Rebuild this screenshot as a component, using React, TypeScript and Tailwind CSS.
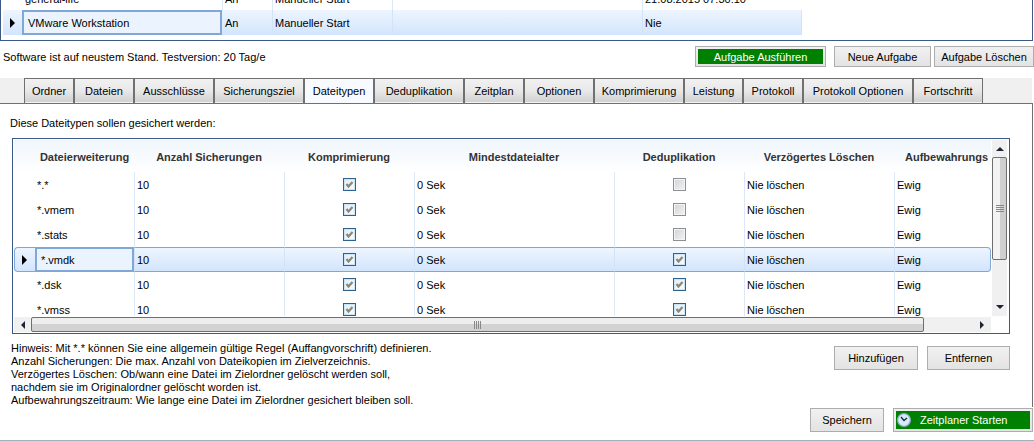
import type { ReactNode } from "react";

const tabs = [
  { name: "Ordner", width: "w-[50px]" },
  { name: "Dateien", width: "w-[60px]" },
  { name: "Ausschlüsse", width: "w-20" },
  { name: "Sicherungsziel", width: "w-[90px]" },
  { name: "Dateitypen", width: "w-[70px]" },
  { name: "Deduplikation", width: "w-[90px]" },
  { name: "Zeitplan", width: "w-[60px]" },
  { name: "Optionen", width: "w-[70px]" },
  { name: "Komprimierung", width: "w-[90px]" },
  { name: "Leistung", width: "w-[59px]" },
  { name: "Protokoll", width: "w-[60px]" },
  { name: "Protokoll Optionen", width: "w-[110px]" },
  { name: "Fortschritt", width: "w-[70px]" },
];

const fileTypes = [
  { ext: "*.*", dedup: false },
  { ext: "*.vmem", dedup: false },
  { ext: "*.stats", dedup: false },
  { ext: "*.vmdk", dedup: true, selected: true },
  { ext: "*.dsk", dedup: true },
  { ext: "*.vmss", dedup: true },
];

function Button({ className, children }: { className: string; children: ReactNode }) {
  return (
    <button type="button" className={`shrink-0 whitespace-nowrap border border-[#adadad] bg-linear-to-b from-[#f1f1f1] to-[#e3e3e3] ${className}`}>
      {children}
    </button>
  );
}

function Arrow({ points, className }: { points: string; className?: string }) {
  return (
    <svg viewBox="0 0 10 10" className={`size-2.5 shrink-0 ${className ?? "fill-[#1d2433]"}`} aria-hidden="true">
      <polygon points={points} />
    </svg>
  );
}

function Check({ label, checked }: { label: string; checked: boolean }) {
  return (
    <span className="relative mx-auto block size-[13px]">
      <input
        type="checkbox"
        aria-label={label}
        defaultChecked={checked}
        className="peer block size-[13px] appearance-none border border-[#8e8f8f] bg-linear-to-br from-[#d0d3d9] to-[#f3f3f3] shadow-[inset_0_0_0_1px_#f4f4f4] checked:border-[#2c628b] checked:from-[#e6ecf2] checked:to-[#fafafa] checked:shadow-[inset_0_0_0_1px_#c9e6f8]"
      />
      <svg viewBox="0 0 13 13" className="pointer-events-none absolute inset-0 hidden peer-checked:block" aria-hidden="true">
        <path d="M3.5 6 L5.5 8.5 L9.5 4" fill="none" stroke="#8a8878" strokeWidth="2.2" />
      </svg>
    </span>
  );
}

function TaskGrid() {
  return (
    <div className="mr-px flex h-[41px] flex-col justify-end overflow-hidden border-x border-b border-[#3b5a87] pb-[5px] pl-0.5">
      <table className="w-[799px] table-fixed border-separate border-spacing-0">
        <colgroup>
          <col className="w-[19px]" />
          <col className="w-[200px]" />
          <col className="w-[50px]" />
          <col className="w-[120px]" />
          <col className="w-[250px]" />
          <col />
        </colgroup>
        <tbody>
          <tr className="h-[25px]">
            <td></td>
            <td className="pl-[3px] pt-1">general-life</td>
            <td className="border-l border-[#dbe9f6] pl-0.5 pt-1">An</td>
            <td className="border-l border-[#dbe9f6] pl-0.5 pt-1">Manueller Start</td>
            <td className="border-l border-[#dbe9f6]"></td>
            <td className="border-l border-[#dbe9f6] pl-0.5 pt-1">21.08.2015 07:30:10</td>
          </tr>
          <tr className="h-[25px] bg-linear-to-b from-[#edf5ff] to-[#d3e5fc]">
            <td>
              <Arrow points="3,0 8,5 3,10" className="ml-1 fill-black" />
            </td>
            <td className="border-2 border-[#7fa8d9] bg-[#ebf4fe] pl-1 pt-0.5">VMware Workstation</td>
            <td className="pl-[3px] pt-0.5">An</td>
            <td className="border-l border-[#d3e3f5] pl-0.5 pt-0.5">Manueller Start</td>
            <td className="border-l border-[#d3e3f5]"></td>
            <td className="border-x border-[#d3e3f5] pl-0.5 pt-0.5">Nie</td>
          </tr>
        </tbody>
      </table>
    </div>
  );
}

function FileTypeGrid() {
  return (
    <div className="ml-3 mr-[22px] border border-[#3b5a87] py-px pl-px pr-0.5">
      <div className="flex h-44 gap-px">
        <div className="min-w-0 flex-1 overflow-hidden">
          <table className="w-full table-fixed border-separate border-spacing-0">
            <colgroup>
              <col className="w-[21px]" />
              <col className="w-[99px]" />
              <col className="w-[150px]" />
              <col className="w-[130px]" />
              <col className="w-[200px]" />
              <col className="w-[130px]" />
              <col className="w-[150px]" />
              <col />
            </colgroup>
            <thead>
              <tr className="h-8 whitespace-nowrap bg-linear-to-b from-[#eff6fc] to-white text-[#333]">
                <th></th>
                <th className="pt-0.5">Dateierweiterung</th>
                <th className="pt-0.5">Anzahl Sicherungen</th>
                <th className="pt-0.5">Komprimierung</th>
                <th className="pt-0.5">Mindestdateialter</th>
                <th className="pt-0.5">Deduplikation</th>
                <th className="pt-0.5">Verzögertes Löschen</th>
                <th className="overflow-hidden pl-[11px] pt-0.5 text-left">Aufbewahrungs</th>
              </tr>
            </thead>
            <tbody>
              {fileTypes.map(({ ext, dedup, selected }) => {
                const cell = selected
                  ? "border-y border-y-[#7fa8d9] border-l border-l-[#d3e3f5] bg-linear-to-b from-[#edf5ff] to-[#d3e5fc]"
                  : "border-l border-[#dbe9f6]";
                return (
                  <tr key={ext} className="h-[25px]">
                    <td className={selected ? "rounded-l border-y border-l border-[#7fa8d9] bg-linear-to-b from-[#edf5ff] to-[#d3e5fc]" : ""}>
                      {selected && <Arrow points="3,0 8,5 3,10" className="ml-1 fill-black" />}
                    </td>
                    <td className={selected ? "border-2 border-[#7fa8d9] bg-[#ebf4fe] pl-1 pt-0.5" : "pl-0.5 pt-0.5"}>{ext}</td>
                    <td className={`${cell} pl-0.5 pt-0.5`}>10</td>
                    <td className={cell}>
                      <Check label={`Komprimierung ${ext}`} checked />
                    </td>
                    <td className={`${cell} pl-0.5 pt-0.5`}>0 Sek</td>
                    <td className={cell}>
                      <Check label={`Deduplikation ${ext}`} checked={dedup} />
                    </td>
                    <td className={`${cell} pl-0.5 pt-0.5`}>Nie löschen</td>
                    <td className={`${cell} pl-0.5 pt-0.5 ${selected ? "rounded-r border-r border-r-[#7fa8d9]" : ""}`}>Ewig</td>
                  </tr>
                );
              })}
            </tbody>
          </table>
        </div>
        <div className="flex w-[15px] flex-col bg-[#f0f0f0]">
          <div className="flex h-[17px] items-center justify-center">
            <Arrow points="1,7 5,3 9,7" />
          </div>
          <div className="flex h-[103px] flex-col items-center justify-center gap-px rounded-xs border border-[#6f6f6f] bg-linear-to-r from-[#f3f3f3] from-50% to-[#cfcfcf] to-50%">
            <span className="h-px w-2 bg-[#888]"></span>
            <span className="h-px w-2 bg-[#888]"></span>
            <span className="h-px w-2 bg-[#888]"></span>
            <span className="h-px w-2 bg-[#888]"></span>
          </div>
          <div className="flex flex-1 items-end justify-center pb-1">
            <Arrow points="1,3 5,7 9,3" />
          </div>
        </div>
      </div>
      <div className="mr-4 mt-px flex h-[15px] bg-[#f0f0f0]">
        <div className="flex w-[17px] items-center justify-center">
          <Arrow points="7,1 3,5 7,9" />
        </div>
        <div className="flex flex-1 items-center justify-center gap-px rounded-xs border border-[#6f6f6f] bg-linear-to-b from-[#eeeeee] from-50% to-[#d2d2d2] to-50%">
          <span className="h-2 w-px bg-[#888]"></span>
          <span className="h-2 w-px bg-[#888]"></span>
          <span className="h-2 w-px bg-[#888]"></span>
          <span className="h-2 w-px bg-[#888]"></span>
        </div>
        <div className="flex w-[67px] items-center justify-end pr-1">
          <Arrow points="3,1 7,5 3,9" />
        </div>
      </div>
    </div>
  );
}

export default function App() {
  return (
    <div className="border-b border-[#a3afc0] bg-white pb-2 font-['Liberation_Sans',Arial,sans-serif] text-[11px] leading-[13px] text-black">
      <TaskGrid />

      <div className="flex items-center pb-[11px] pt-[5px]">
        <p className="flex-1 pl-[3px] pt-0.5">Software ist auf neustem Stand. Testversion: 20 Tag/e</p>
        <Button className="mr-2 h-[21px] w-[131px] p-0.5">
          <span className="flex h-full items-center justify-center bg-[#008000] pt-0.5 text-white">Aufgabe Ausführen</span>
        </Button>
        <Button className="mr-[3px] h-[21px] w-[97px] pt-0.5">Neue Aufgabe</Button>
        <Button className="h-[21px] w-[100px] pt-0.5">Aufgabe Löschen</Button>
      </div>

      <div role="tablist" className="mr-0.5 flex h-[25px] bg-[#f0f0f0] pl-6">
        {tabs.map(({ name, width }) => {
          const active = name === "Dateitypen";
          return (
            <button
              key={name}
              type="button"
              role="tab"
              aria-selected={active}
              className={`shrink-0 whitespace-nowrap border-x border-t border-[#707070] ${width} ${
                active ? "bg-[#f7fbff]" : "bg-linear-to-b from-[#f1f1f1] via-[#e8e8e8] via-50% to-[#cfcfcf] shadow-[inset_0_-1px_0_0_#f4f4f4]"
              }`}
            >
              {name}
            </button>
          );
        })}
      </div>

      <div role="tabpanel" className="mr-px border-r border-t border-[#707070] pt-[13px]">
        <p className="pb-2 pl-2.5">Diese Dateitypen sollen gesichert werden:</p>
        <FileTypeGrid />
        <div className="flex items-start pl-[11px] pr-[22px] pt-2">
          <p className="flex-1">
            Hinweis: Mit *.* können Sie eine allgemein gültige Regel (Auffangvorschrift) definieren.
            <br />
            Anzahl Sicherungen: Die max. Anzahl von Dateikopien im Zielverzeichnis.
            <br />
            Verzögertes Löschen: Ob/wann eine Datei im Zielordner gelöscht werden soll,
            <br />
            nachdem sie im Originalordner gelöscht worden ist.
            <br />
            Aufbewahrungszeitraum: Wie lange eine Datei im Zielordner gesichert bleiben soll.
          </p>
          <div className="flex gap-[9px] pt-1">
            <Button className="h-6 w-[84px]">Hinzufügen</Button>
            <Button className="h-6 w-[83px]">Entfernen</Button>
          </div>
        </div>
      </div>

      <div className="flex justify-end gap-[9px] pr-px pt-px">
        <Button className="h-6 w-[74px]">Speichern</Button>
        <Button className="h-6 w-[140px] p-0.5">
          <span className="flex h-full items-center bg-[#008000] pl-px text-white">
            <svg viewBox="0 0 14 14" className="mr-[9px] size-3.5" aria-hidden="true">
              <circle cx="7" cy="7" r="6.4" fill="#d7ecfa" stroke="#8fa9c4" strokeWidth="1.2" />
              <path d="M4 4 L7 7.5 L10 5" fill="none" stroke="#1c2a3a" strokeWidth="1.3" />
            </svg>
            Zeitplaner Starten
          </span>
        </Button>
      </div>
    </div>
  );
}
